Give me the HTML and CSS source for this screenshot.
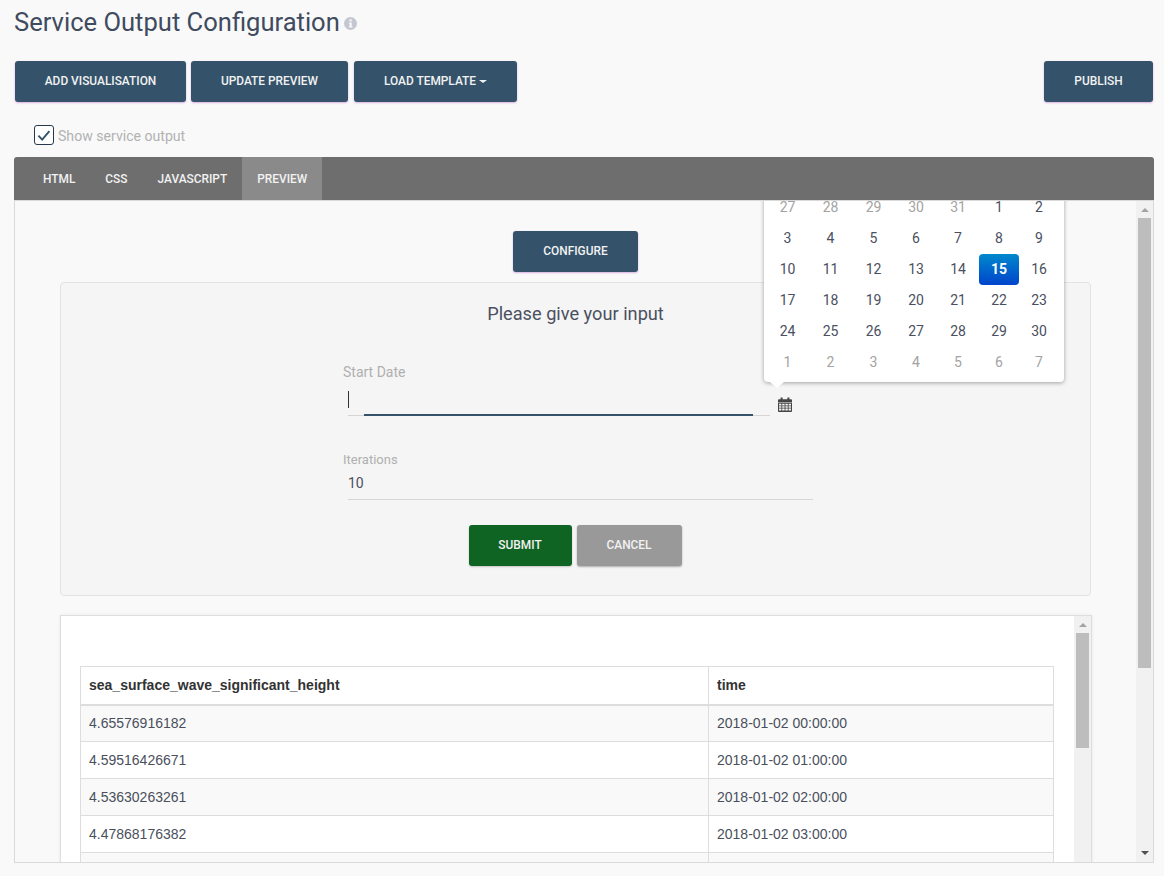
FILE: index.html
```html
<!DOCTYPE html>
<html lang="en">
<head>
<meta charset="utf-8">
<title>Service Output Configuration</title>
<link rel="stylesheet" href="styles.css">
</head>
<body>
<div class="page">
  <header class="title-row">
    <h1 class="title">Service Output Configuration</h1>
    <svg class="info-icon" width="13" height="13" viewBox="0 0 13 13"><circle cx="6.5" cy="6.5" r="6.5" fill="#c4c7cf"/><rect x="5.5" y="2.4" width="2.2" height="2" fill="#f9f9f9"/><path d="M4.8 5.4h2.9v4.1h.9v1.1H4.8V9.5h.8V6.5h-.8z" fill="#f9f9f9"/></svg>
  </header>

  <div class="toolbar">
    <button class="btn btn-primary btn-add">Add Visualisation</button>
    <button class="btn btn-primary btn-update">Update Preview</button>
    <button class="btn btn-primary btn-load">Load Template<span class="caret"></span></button>
    <button class="btn btn-primary btn-publish">Publish</button>
  </div>

  <label class="show-row">
    <span class="checkbox"><svg width="19" height="19" viewBox="0 0 19 19"><path d="M3.6 9.6l4 4.2 7.6-8.8" fill="none" stroke="#34536b" stroke-width="2"/></svg></span>
    <span class="show-label">Show service output</span>
  </label>

  <nav class="tabs">
    <a class="tab">HTML</a>
    <a class="tab">CSS</a>
    <a class="tab">JavaScript</a>
    <a class="tab tab-active">Preview</a>
  </nav>

  <section class="panel">
    <div class="panel-body">
      <div class="configure-row">
        <button class="btn btn-primary btn-configure">Configure</button>
      </div>

      <div class="well">
        <h2 class="well-title">Please give your input</h2>
        <div class="form">
          <div class="field-label field-label-date">Start Date</div>
          <div class="date-row">
            <div class="date-input">
              <span class="text-cursor"></span>
              <span class="focus-line"></span>
            </div>
            <svg class="cal-icon" width="14" height="15" viewBox="0 0 14 15">
              <path d="M0 3.2a1 1 0 0 1 1-1h1.6V.6h2v1.6h4.8V.6h2v1.6H13a1 1 0 0 1 1 1V5H0z" fill="#444"/>
              <path fill-rule="evenodd" d="M0 5.6h14V14a1 1 0 0 1-1 1H1a1 1 0 0 1-1-1zM1 6.8v1.6h2.4V6.8zm3.2 0v1.6h2.4V6.8zm3.2 0v1.6h2.4V6.8zm3.2 0v1.6H13V6.8zM1 9.2v1.6h2.4V9.2zm3.2 0v1.6h2.4V9.2zm3.2 0v1.6h2.4V9.2zm3.2 0v1.6H13V9.2zM1 11.6v1.8h2.4v-1.8zm3.2 0v1.8h2.4v-1.8zm3.2 0v1.8h2.4v-1.8zm3.2 0v1.8H13v-1.8z" fill="#444"/>
            </svg>
          </div>
          <div class="field-label field-label-iter">Iterations</div>
          <div class="iter-input">10</div>
        </div>
        <div class="form-actions">
          <button class="btn btn-success">Submit</button>
          <button class="btn btn-cancel">Cancel</button>
        </div>
      </div>

      <div class="output-card">
        <div class="output-content">
          <table class="data-table">
            <thead>
              <tr><th class="col-a">sea_surface_wave_significant_height</th><th>time</th></tr>
            </thead>
            <tbody>
              <tr><td>4.65576916182</td><td>2018-01-02 00:00:00</td></tr>
              <tr><td>4.59516426671</td><td>2018-01-02 01:00:00</td></tr>
              <tr><td>4.53630263261</td><td>2018-01-02 02:00:00</td></tr>
              <tr><td>4.47868176382</td><td>2018-01-02 03:00:00</td></tr>
              <tr><td>&nbsp;</td><td>&nbsp;</td></tr>
            </tbody>
          </table>
        </div>
        <div class="scrollbar scrollbar-inner">
          <span class="arrow arrow-up"></span>
          <span class="thumb thumb-inner"></span>
        </div>
      </div>
    </div>

    <div class="scrollbar scrollbar-outer">
      <span class="arrow arrow-up"></span>
      <span class="thumb thumb-outer"></span>
      <span class="arrow arrow-down"></span>
    </div>

    <div class="datepicker">
      <div class="days">
        <span class="old">27</span><span class="old">28</span><span class="old">29</span><span class="old">30</span><span class="old">31</span><span>1</span><span>2</span>
        <span>3</span><span>4</span><span>5</span><span>6</span><span>7</span><span>8</span><span>9</span>
        <span>10</span><span>11</span><span>12</span><span>13</span><span>14</span><span class="active">15</span><span>16</span>
        <span>17</span><span>18</span><span>19</span><span>20</span><span>21</span><span>22</span><span>23</span>
        <span>24</span><span>25</span><span>26</span><span>27</span><span>28</span><span>29</span><span>30</span>
        <span class="old">1</span><span class="old">2</span><span class="old">3</span><span class="old">4</span><span class="old">5</span><span class="old">6</span><span class="old">7</span>
      </div>
    </div>
  </section>
</div>
</body>
</html>
```

FILE: styles.css
```css
* { box-sizing: border-box; }

html, body {
  margin: 0;
  height: 876px;
  overflow: hidden;
  background: #f9f9f9;
}

body {
  font-family: Roboto, "Liberation Sans", sans-serif;
  color: #4a5060;
}

.page {
  padding: 0 10px 0 14px;
}

.title-row {
  display: flex;
  align-items: center;
  height: 44px;
  margin-bottom: 17px;
}

.title {
  margin: 0;
  font-size: 25.55px;
  font-weight: 400;
  line-height: 44px;
  color: #3f4b5e;
}

.info-icon {
  margin-left: 4px;
  margin-top: 2px;
}

.toolbar {
  display: flex;
  padding: 0 1px;
  height: 41px;
}

.btn {
  height: 41px;
  border: 0;
  border-radius: 3px;
  padding: 0 0 2px;
  font-family: Roboto, sans-serif;
  font-size: 11.9px;
  font-weight: 500;
  text-transform: uppercase;
  color: #f2f2f2;
}

.btn-primary {
  background: #34536b;
  box-shadow: 0 1px 2px rgba(156, 39, 176, 0.35);
}

.btn-add { width: 171px; margin-right: 5px; }
.btn-update { width: 157px; margin-right: 6px; }
.btn-load { width: 163px; }
.btn-publish { width: 109px; margin-left: auto; }

.caret {
  display: inline-block;
  margin-left: 3px;
  vertical-align: middle;
  border-top: 3px solid #f2f2f2;
  border-left: 4px solid transparent;
  border-right: 4px solid transparent;
}

.show-row {
  display: flex;
  align-items: center;
  height: 20px;
  margin: 23px 0 12px 20px;
}

.checkbox {
  display: flex;
  align-items: center;
  justify-content: center;
  flex: none;
  width: 20px;
  height: 20px;
  background: #fff;
  border: 1.5px solid #26384a;
  border-radius: 3px;
}

.show-label {
  margin: 2px 0 0 4px;
  font-size: 14.1px;
  color: #b2b2b2;
}

.tabs {
  display: flex;
  height: 43px;
  padding-left: 14px;
  background: #6e6e6e;
  border-radius: 3px 3px 0 0;
}

.tab {
  padding: 1px 15px 0;
  font-size: 11.9px;
  font-weight: 500;
  line-height: 43px;
  text-transform: uppercase;
  color: #f2f2f2;
}

.tab-active {
  width: 80px;
  background: #8a8a8a;
}

.panel {
  position: relative;
  display: flex;
  height: 663px;
  overflow: hidden;
  border: 1px solid #d9d9d9;
  background: #f9f9f9;
}

.panel-body {
  flex: 1;
  min-width: 0;
  padding: 30px 45px 0 45px;
  overflow: hidden;
}

.configure-row {
  display: flex;
  justify-content: center;
  margin-bottom: 10px;
}

.btn-configure { width: 125px; }

.well {
  height: 314px;
  background: #f5f5f5;
  border: 1px solid #e3e3e3;
  border-radius: 4px;
  margin-bottom: 19px;
}

.well-title {
  margin: 0;
  padding-top: 20px;
  font-size: 18.2px;
  font-weight: 400;
  line-height: 22px;
  text-align: center;
  color: #4a5060;
}

.form {
  margin: 39px 0 0 282px;
  width: 475px;
}

.field-label {
  color: #b0b0b0;
  line-height: 16px;
}

.field-label-date { font-size: 14px; }
.field-label-iter { font-size: 13px; margin-top: 36px; }

.date-row {
  display: flex;
  align-items: flex-end;
  margin: 10px 0 0 5px;
}

.date-input {
  position: relative;
  width: 422px;
  height: 26px;
  border-bottom: 1px solid #d5d5d5;
}

.text-cursor {
  position: absolute;
  left: 0;
  top: 1px;
  width: 1px;
  height: 17px;
  background: #333;
}

.focus-line {
  position: absolute;
  left: 16px;
  right: 17px;
  bottom: -1px;
  height: 2px;
  background: #34536b;
}

.cal-icon {
  margin: 0 0 4px 8px;
}

.iter-input {
  width: 465px;
  height: 32px;
  margin: 0 0 0 5px;
  padding-top: 7px;
  font-size: 14px;
  line-height: 17px;
  border-bottom: 1px solid #d5d5d5;
}

.form-actions {
  display: flex;
  justify-content: center;
  gap: 5px;
  margin-top: 25px;
  padding-right: 1px;
}

.btn-success {
  width: 103px;
  background: #0f6424;
  box-shadow: 0 1px 2px rgba(0, 0, 0, 0.2);
}

.btn-cancel {
  width: 105px;
  background: #999;
  box-shadow: 0 1px 2px rgba(0, 0, 0, 0.3);
}

.output-card {
  display: flex;
  width: 1032px;
  height: 300px;
  background: #fff;
  border: 1px solid #dedede;
  box-shadow: 0 0 3px rgba(0, 0, 0, 0.08);
}

.output-content {
  flex: 1;
  min-width: 0;
  padding: 50px 19px 0 19px;
}

.data-table {
  width: 974px;
  border-collapse: collapse;
  font-family: "Liberation Sans", Arial, sans-serif;
  font-size: 14px;
  color: #4a4f5c;
}

.data-table th,
.data-table td {
  height: 37px;
  padding: 0 8px;
  text-align: left;
  border: 1px solid #ddd;
}

.data-table th {
  height: 38px;
  font-weight: 700;
  color: #333;
  border-bottom-width: 2px;
}

.col-a { width: 628px; }

.data-table tbody tr:nth-child(odd) {
  background: #f9f9f9;
}

.scrollbar {
  display: flex;
  flex-direction: column;
  flex: none;
  width: 17px;
  padding: 0 2px;
  background: #f1f1f1;
}

.thumb {
  display: block;
  width: 13px;
  background: #bdbdbd;
}

.thumb-inner { height: 115px; }
.thumb-outer { height: 450px; }

.arrow {
  display: block;
  flex: none;
  width: 0;
  height: 0;
  margin-left: 3px;
  border-left: 4px solid transparent;
  border-right: 4px solid transparent;
}

.arrow-up {
  border-bottom: 4px solid #a3a3a3;
  margin-top: 7px;
  margin-bottom: 6px;
}

.arrow-down {
  border-top: 4px solid #505050;
  margin-top: auto;
  margin-bottom: 7px;
}

.datepicker {
  position: absolute;
  left: 749px;
  top: -9px;
  width: 300px;
  padding: 0 2px 4px;
  background: #fff;
  border-radius: 0 0 4px 4px;
  box-shadow: 0 1px 4px rgba(0, 0, 0, 0.35);
}

.datepicker::after {
  content: "";
  position: absolute;
  left: 6px;
  bottom: -6px;
  border-top: 6px solid #fff;
  border-left: 7px solid transparent;
  border-right: 7px solid transparent;
}

.days {
  display: grid;
  grid-template-columns: 43px 43px 43px 42px 42px 40px 40px;
  grid-auto-rows: 31px;
  font-size: 14px;
  line-height: 31px;
  text-align: center;
  color: #4a5060;
}

.days .old { color: #a3a3a3; }

.days .active {
  color: #fff;
  font-weight: 700;
  border-radius: 4px;
  background: linear-gradient(#0088cc, #0044cc);
}
```
